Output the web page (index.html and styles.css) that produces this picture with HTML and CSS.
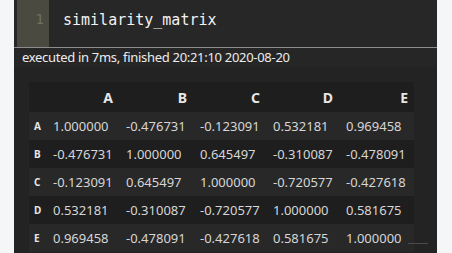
FILE: index.html
```html
<!DOCTYPE html>
<html lang="en">
<head>
    <meta charset="UTF-8">
    <title>similarity_matrix</title>
    <link rel="stylesheet" href="styles.css">
</head>
<body>
    <div class="cell">
        <div class="input">
            <div class="gutter">1</div>
            <div class="code">similarity_matrix</div>
        </div>
        <div class="exec">executed in 7ms, finished 20:21:10 2020-08-20</div>
        <div class="output">
            <table class="frame">
                <colgroup>
                    <col class="c-idx">
                    <col class="c-a">
                    <col class="c-b">
                    <col class="c-c">
                    <col class="c-d">
                    <col class="c-e">
                </colgroup>
                <thead>
                    <tr>
                        <th></th>
                        <th>A</th>
                        <th>B</th>
                        <th>C</th>
                        <th>D</th>
                        <th>E</th>
                    </tr>
                </thead>
                <tbody>
                    <tr>
                        <th>A</th>
                        <td>1.000000</td>
                        <td>-0.476731</td>
                        <td>-0.123091</td>
                        <td>0.532181</td>
                        <td>0.969458</td>
                    </tr>
                    <tr>
                        <th>B</th>
                        <td>-0.476731</td>
                        <td>1.000000</td>
                        <td>0.645497</td>
                        <td>-0.310087</td>
                        <td>-0.478091</td>
                    </tr>
                    <tr>
                        <th>C</th>
                        <td>-0.123091</td>
                        <td>0.645497</td>
                        <td>1.000000</td>
                        <td>-0.720577</td>
                        <td>-0.427618</td>
                    </tr>
                    <tr>
                        <th>D</th>
                        <td>0.532181</td>
                        <td>-0.310087</td>
                        <td>-0.720577</td>
                        <td>1.000000</td>
                        <td>0.581675</td>
                    </tr>
                    <tr>
                        <th>E</th>
                        <td>0.969458</td>
                        <td>-0.478091</td>
                        <td>-0.427618</td>
                        <td>0.581675</td>
                        <td>1.000000</td>
                    </tr>
                </tbody>
            </table>
            <div class="scroll-thumb"></div>
        </div>
    </div>
</body>
</html>
```

FILE: styles.css
```css
html, body {
    margin: 0;
    padding: 0;
}

body {
    background-color: #f5f6f8;
    width: 452px;
    height: 253px;
    overflow: hidden;
    font-family: 'Noto Sans', 'Open Sans', sans-serif;
}

/* the notebook cell */
.cell {
    margin-left: 14px;
    width: 423px;
    height: 253px;
    background-color: #232323;
}

.input {
    display: flex;
    height: 47px;
    background-color: #272727;
    border-bottom: 1px solid #8c8c8c;
}

.gutter {
    width: 32px;
    margin-left: 3px;
    background-color: #4a4a40;
    color: #6f6f62;
    font-family: 'DejaVu Sans Mono', monospace;
    font-size: 14px;
    text-align: right;
    padding-right: 5px;
    box-sizing: border-box;
    padding-top: 11px;
}

.code {
    padding-left: 14px;
    padding-top: 10px;
    font-family: 'DejaVu Sans Mono', 'Liberation Mono', monospace;
    font-size: 15px;
    line-height: 20px;
    color: #f2f2f2;
}

.exec {
    height: 19px;
    line-height: 19px;
    padding-left: 8px;
    background-color: #262626;
    color: #ececec;
    font-size: 13px;
    letter-spacing: -0.3px;
}

/* dataframe output */
.output {
    position: relative;
    padding: 15px 0 0 15px;
}

.frame {
    border-collapse: collapse;
    table-layout: fixed;
    width: 385px;
    font-size: 13px;
    color: #d6d6d6;
}

.c-idx { width: 17px; }
.c-a { width: 73px; }
.c-b { width: 74px; }
.c-c { width: 73px; }
.c-d { width: 73px; }
.c-e { width: 75px; }

.frame th, .frame td {
    padding: 0 6px 0 7px;
    white-space: nowrap;
}

.frame thead tr {
    height: 30px;
    background-color: #1e1e1e;
}

.frame thead th {
    text-align: right;
    font-size: 14px;
    font-weight: bold;
    color: #e6e6e6;
}

.frame tbody tr {
    height: 28px;
}

.frame tbody tr:nth-child(odd) {
    background-color: #282828;
}

.frame tbody tr:nth-child(even) {
    background-color: #1e1e1e;
}

.frame tbody th {
    padding: 0 0 0 5px;
    text-align: left;
    font-size: 10px;
    font-weight: bold;
    color: #e6e6e6;
}

.frame td {
    text-align: left;
}

.scroll-thumb {
    position: absolute;
    left: 394px;
    top: 176px;
    width: 20px;
    height: 1px;
    background-color: #4a4a4a;
}
```
